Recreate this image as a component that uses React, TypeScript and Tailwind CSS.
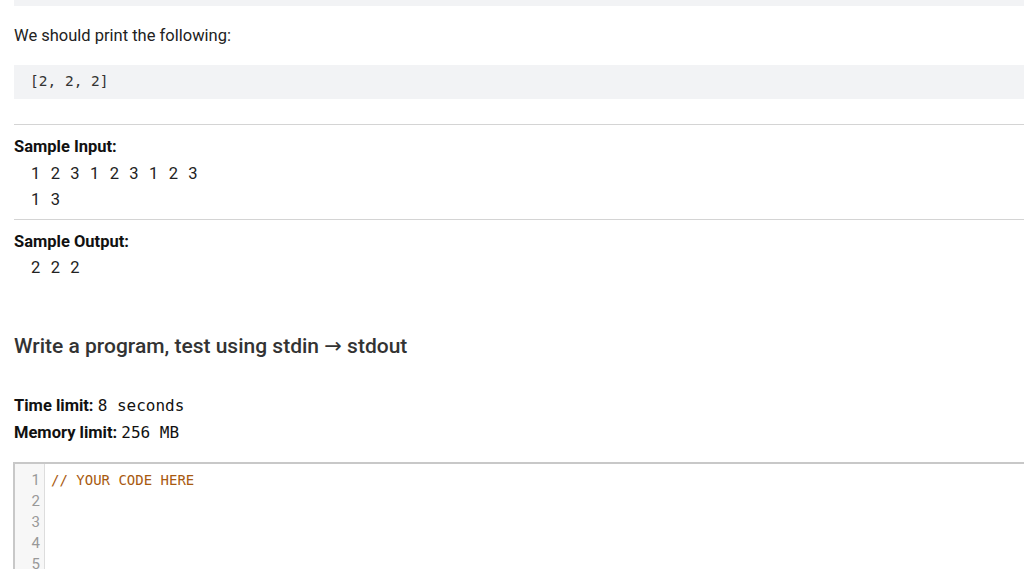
import React from "react";

const mono = "font-['DejaVu_Sans_Mono','Liberation_Mono',monospace]";

export default function App() {
  return (
    <div className="w-[1024px] h-[569px] overflow-hidden bg-white font-['Roboto','Noto_Sans',sans-serif] text-[#222]">
      <div className="pl-[14px]">
        <div className="h-[6px] bg-[#f2f3f5]" />
        <p className="mt-[19px] text-[16.5px] leading-[22px] text-[#222]">We should print the following:</p>
        <div className={`mt-[18px] h-[34px] bg-[#f2f3f5] pl-[16px] flex items-center text-[14.5px] text-[#333] ${mono}`}>
          <span className="whitespace-pre">[2, 2, 2]</span>
        </div>
        <div className="mt-[25px] border-t border-[#d4d4d4]" />
        <div className="pt-[10px] pb-[6px]">
          <div className="mb-[3px] text-[16.5px] leading-[23px] font-bold text-[#111]">Sample Input:</div>
          <div className="pl-[17px] text-[16.5px] leading-[26px] whitespace-pre text-[#222] [word-spacing:6.3px]">
            <div>1 2 3 1 2 3 1 2 3</div>
            <div>1 3</div>
          </div>
        </div>
        <div className="border-t border-[#d4d4d4]" />
        <div className="pt-[10px]">
          <div className="mb-[2px] text-[16.5px] leading-[23px] font-bold text-[#111]">Sample Output:</div>
          <div className="pl-[17px] text-[16.5px] leading-[26px] whitespace-pre text-[#222] [word-spacing:6.3px]">
            <div>2 2 2</div>
          </div>
        </div>
        <h2 className="mt-[51px] text-[21px] leading-[28px] font-medium text-[#333]">
          Write a program, test using stdin{" "}
          <span className="font-['DejaVu_Sans',sans-serif] font-normal">→</span> stdout
        </h2>
        <div className="mt-[32px] text-[16.5px] leading-[27px] text-[#111]">
          <div>
            <span className="font-bold">Time limit:</span>{" "}
            <span className={`${mono} text-[16px] whitespace-pre`}>8 seconds</span>
          </div>
          <div>
            <span className="font-bold">Memory limit:</span>{" "}
            <span className={`${mono} text-[16px] whitespace-pre`}>256 MB</span>
          </div>
        </div>
        <div className="mt-[16px] border-t-[2px] border-l-[2px] border-[#c8c8c8] -ml-[1px] flex">
          <div className="w-[30px] bg-[#f7f7f7] border-r border-[#ddd] pr-[4px] pt-[6px] text-right text-[15px] leading-[21px] text-[#999]">
            <div>1</div>
            <div>2</div>
            <div>3</div>
            <div>4</div>
            <div>5</div>
          </div>
          <div className={`pl-[6px] pt-[6px] text-[14px] leading-[21px] text-[#a85a10] ${mono}`}>
            <div className="whitespace-pre">// YOUR CODE HERE</div>
          </div>
        </div>
      </div>
    </div>
  );
}
